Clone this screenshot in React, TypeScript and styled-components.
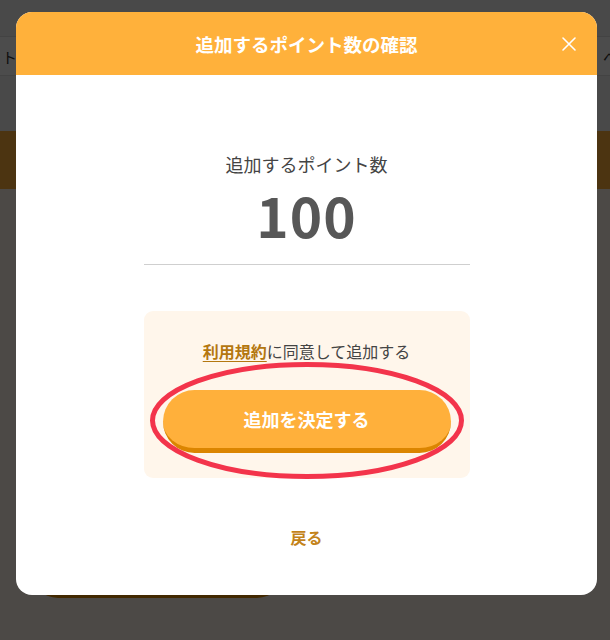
import React from "react";
import styled, { createGlobalStyle } from "styled-components";

const GlobalStyle = createGlobalStyle`
  html, body {
    margin: 0;
    padding: 0;
  }
  body {
    font-family: "Noto Sans CJK JP", "Noto Sans", sans-serif;
    color: #444;
  }
`;

const Page = styled.div`
  position: relative;
  width: 610px;
  height: 640px;
  overflow: hidden;
  background: #fff6eb;
`;

const TopBar = styled.div`
  height: 36px;
  background: #f3f3f3;
`;

const TabRow = styled.div`
  height: 38px;
  background: #ffffff;
  border-top: 1px solid #e0e0e0;
  border-bottom: 1px solid #e0e0e0;
  display: flex;
  align-items: center;
  justify-content: space-between;
  padding: 0 0 0 2px;
  font-size: 15px;
  color: #333;
  overflow: hidden;
  white-space: nowrap;
`;

const TabText = styled.span<{ $right?: boolean }>`
  margin-right: ${(p) => (p.$right ? "-8px" : "0")};
`;

const SubBar = styled.div`
  height: 55px;
  background: #f3f3f3;
`;

const Banner = styled.div`
  height: 58px;
  background: #ffb03b;
`;

const PageBody = styled.div`
  padding: 352px 0 0 30px;
`;

const PageButton = styled.div`
  width: 255px;
  height: 50px;
  background: #ffb03b;
  border-bottom: 7px solid #dc8700;
  border-radius: 28px;
`;

const Overlay = styled.div`
  position: absolute;
  inset: 0;
  background: rgba(0, 0, 0, 0.7);
  padding: 12px 13px 0 16px;
`;

const Modal = styled.div`
  width: 581px;
  height: 583px;
  background: #ffffff;
  border-radius: 16px;
  overflow: hidden;
  display: flex;
  flex-direction: column;
`;

const Header = styled.div`
  position: relative;
  height: 63px;
  background: #ffb13b;
  display: flex;
  align-items: center;
  justify-content: center;
`;

const Title = styled.h2`
  margin: 0;
  font-size: 18.5px;
  font-weight: 700;
  color: #ffffff;
`;

const CloseButton = styled.button`
  position: absolute;
  right: 20px;
  top: 24px;
  width: 16px;
  height: 16px;
  padding: 0;
  border: none;
  background: none;
  cursor: pointer;
  display: flex;
`;

const Body = styled.div`
  display: flex;
  flex-direction: column;
  align-items: center;
  padding-top: 77px;
`;

const Label = styled.p`
  margin: 0;
  font-size: 18px;
  line-height: 24px;
  color: #444;
`;

const Amount = styled.div`
  margin-top: 8px;
  font-size: 55px;
  line-height: 60px;
  font-weight: 700;
  letter-spacing: 1px;
  color: #575757;
`;

const Divider = styled.hr`
  width: 326px;
  margin: 20px 0 0;
  border: none;
  border-top: 1px solid #cfcfcf;
`;

const ConfirmBox = styled.div`
  width: 326px;
  margin-top: 46px;
  box-sizing: border-box;
  padding: 28px 19px 25px;
  background: #fff6eb;
  border-radius: 9px;
  display: flex;
  flex-direction: column;
  align-items: center;
`;

const Agree = styled.p`
  margin: 0;
  font-size: 16px;
  line-height: 24px;
  color: #444;
`;

const TermsLink = styled.a`
  color: #b4770f;
  font-weight: 700;
  text-decoration: underline;
  text-underline-offset: 3px;
`;

const ButtonWrap = styled.div`
  position: relative;
  margin-top: 27px;
  width: 100%;
`;

const SubmitButton = styled.button`
  width: 100%;
  height: 63px;
  border: none;
  border-bottom: 5px solid #db8500;
  border-radius: 32px;
  background: #ffb03b;
  color: #ffffff;
  font-family: inherit;
  font-size: 18px;
  font-weight: 700;
  cursor: pointer;
`;

const Highlight = styled.svg`
  position: absolute;
  left: -13px;
  top: -28px;
  width: 314px;
  height: 117px;
  pointer-events: none;
  overflow: visible;
`;

const BackLink = styled.a`
  margin-top: 47px;
  font-size: 16px;
  line-height: 24px;
  font-weight: 700;
  color: #c3831a;
  cursor: pointer;
`;

export default function App() {
  return (
    <>
      <GlobalStyle />
      <Page>
        <TopBar />
        <TabRow>
          <TabText>ト</TabText>
          <TabText $right>ペ</TabText>
        </TabRow>
        <SubBar />
        <Banner />
        <PageBody>
          <PageButton />
        </PageBody>
        <Overlay>
          <Modal>
            <Header>
              <Title>追加するポイント数の確認</Title>
              <CloseButton aria-label="閉じる">
                <svg width="16" height="16" viewBox="0 0 16 16">
                  <path
                    d="M2 2 L14 14 M14 2 L2 14"
                    stroke="#ffffff"
                    strokeWidth="1.6"
                    strokeLinecap="round"
                  />
                </svg>
              </CloseButton>
            </Header>
            <Body>
              <Label>追加するポイント数</Label>
              <Amount>100</Amount>
              <Divider />
              <ConfirmBox>
                <Agree>
                  <TermsLink>利用規約</TermsLink>に同意して追加する
                </Agree>
                <ButtonWrap>
                  <SubmitButton>追加を決定する</SubmitButton>
                  <Highlight viewBox="0 0 314 117">
                    <ellipse
                      cx="157"
                      cy="58.5"
                      rx="154.5"
                      ry="56"
                      fill="none"
                      stroke="#f3344b"
                      strokeWidth="5"
                    />
                  </Highlight>
                </ButtonWrap>
              </ConfirmBox>
              <BackLink>戻る</BackLink>
            </Body>
          </Modal>
        </Overlay>
      </Page>
    </>
  );
}
